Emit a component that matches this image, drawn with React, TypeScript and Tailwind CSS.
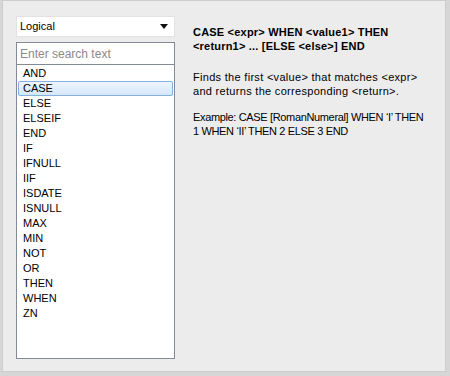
const items = [
  "AND",
  "CASE",
  "ELSE",
  "ELSEIF",
  "END",
  "IF",
  "IFNULL",
  "IIF",
  "ISDATE",
  "ISNULL",
  "MAX",
  "MIN",
  "NOT",
  "OR",
  "THEN",
  "WHEN",
  "ZN",
];

const App = () => {
  return (
    <div className="w-[450px] h-[376px] bg-[#d6d6d6] font-['Liberation_Sans',Tahoma,sans-serif] text-[11px] text-black">
      <div className="ml-[2px] w-[444px] h-[372px] border border-[#cdcdcd] bg-[#ececec] flex pl-[13px] pt-[15px]">
        {/* left column */}
        <div className="w-[159px] flex flex-col">
          <div className="h-[21px] bg-white border border-[#e2e2e2] flex items-center justify-between pl-[3px] pr-[6px]">
            <span>Logical</span>
            <svg width="8" height="5" viewBox="0 0 8 5">
              <path d="M0 0H8L4 5Z" fill="#111" />
            </svg>
          </div>
          <div className="mt-[5px] h-[23px] bg-white border border-[#838a96] flex items-center pl-[3px] text-[#8a8a8a] text-[12px]">
            Enter search text
          </div>
          <div className="h-[294px] bg-white border border-t-0 border-[#838a96] pt-[1px] px-[1px]">
            {items.map((it) =>
              it === "CASE" ? (
                <div
                  key={it}
                  className="h-[15px] flex items-center pl-[4px] rounded-[2px] border border-[#86aedf] bg-gradient-to-b from-[#eef5fd] to-[#d5e6fa]"
                >
                  {it}
                </div>
              ) : (
                <div key={it} className="h-[15px] flex items-center pl-[5px]">
                  {it}
                </div>
              )
            )}
          </div>
        </div>

        {/* right column */}
        <div className="ml-[18px] pt-[9px] whitespace-nowrap">
          <p className="font-bold leading-[14px] text-[11px] tracking-[0.2px]">
            CASE &lt;expr&gt; WHEN &lt;value1&gt; THEN
            <br />
            &lt;return1&gt; ... [ELSE &lt;else&gt;] END
          </p>
          <p className="mt-[17px] leading-[14px] tracking-[0.3px]">
            Finds the first &lt;value&gt; that matches &lt;expr&gt;
            <br />
            and returns the corresponding &lt;return&gt;.
          </p>
          <p className="mt-[12px] leading-[14px] tracking-[-0.35px]">
            Example: CASE [RomanNumeral] WHEN ‘I’ THEN
            <br />1 WHEN ‘II’ THEN 2 ELSE 3 END
          </p>
        </div>
      </div>
    </div>
  );
};

export default App;
